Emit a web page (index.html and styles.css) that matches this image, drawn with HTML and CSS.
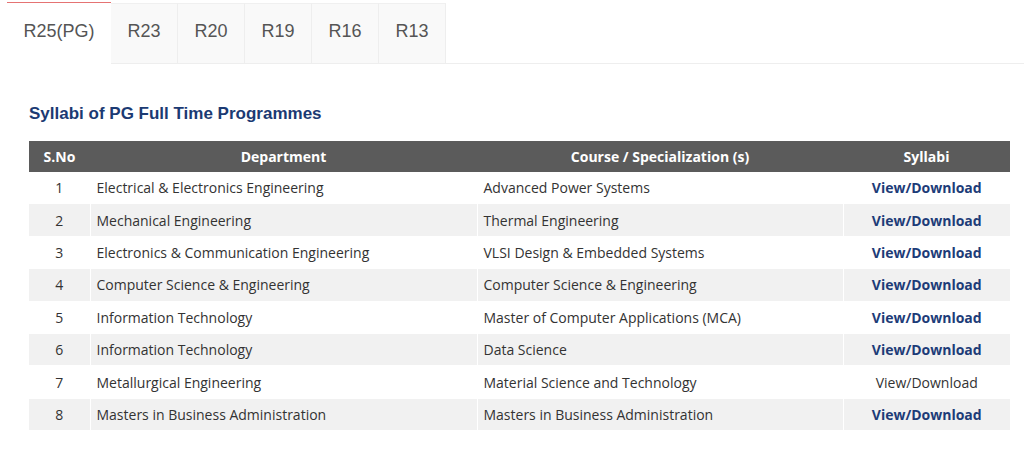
FILE: index.html
```html
<!DOCTYPE html>
<html>
<head>
<meta charset="utf-8">
<link rel="stylesheet" href="styles.css">
</head>
<body>
<div class="tabs">
  <div class="tab active">R25(PG)</div>
  <div class="tab">R23</div>
  <div class="tab">R20</div>
  <div class="tab">R19</div>
  <div class="tab">R16</div>
  <div class="tab">R13</div>
  <div class="tab-fill"></div>
</div>
<div class="content">
  <h2 class="title">Syllabi of PG Full Time Programmes</h2>
  <table class="syl">
    <colgroup>
      <col class="c1"><col class="c2"><col class="c3"><col class="c4">
    </colgroup>
    <thead>
      <tr><th>S.No</th><th>Department</th><th>Course / Specialization (s)</th><th>Syllabi</th></tr>
    </thead>
    <tbody>
      <tr><td class="num">1</td><td>Electrical &amp; Electronics Engineering</td><td>Advanced Power Systems</td><td class="lnk"><a>View/Download</a></td></tr>
      <tr><td class="num">2</td><td>Mechanical Engineering</td><td>Thermal Engineering</td><td class="lnk"><a>View/Download</a></td></tr>
      <tr><td class="num">3</td><td>Electronics &amp; Communication Engineering</td><td>VLSI Design &amp; Embedded Systems</td><td class="lnk"><a>View/Download</a></td></tr>
      <tr><td class="num">4</td><td>Computer Science &amp; Engineering</td><td>Computer Science &amp; Engineering</td><td class="lnk"><a>View/Download</a></td></tr>
      <tr><td class="num">5</td><td>Information Technology</td><td>Master of Computer Applications (MCA)</td><td class="lnk"><a>View/Download</a></td></tr>
      <tr><td class="num">6</td><td>Information Technology</td><td>Data Science</td><td class="lnk"><a>View/Download</a></td></tr>
      <tr><td class="num">7</td><td>Metallurgical Engineering</td><td>Material Science and Technology</td><td class="lnk plain">View/Download</td></tr>
      <tr><td class="num">8</td><td>Masters in Business Administration</td><td>Masters in Business Administration</td><td class="lnk"><a>View/Download</a></td></tr>
    </tbody>
  </table>
</div>
</body>
</html>
```

FILE: styles.css
```css
html, body {
  margin: 0;
  padding: 0;
  background: #fff;
}
body {
  font-family: "Open Sans", "Liberation Sans", sans-serif;
  color: #333;
}
.tabs {
  display: flex;
  padding: 2px 0 0 7px;
  height: 62px;
}
.tab {
  font-family: "Liberation Sans", Arial, sans-serif;
  font-size: 18px;
  color: #555;
  background: #f9f9f9;
  border: 1px solid #eee;
  border-left: none;
  border-top: 1px solid #f0f0f0;
  margin-top: 1px;
  width: 67px;
  box-sizing: border-box;
  display: flex;
  align-items: center;
  justify-content: center;
  padding-bottom: 5px;
}
.tab.active {
  background: #fff;
  border: none;
  border-top: 1px solid #e57373;
  margin-top: 0;
  width: 104px;
  padding: 0 0 4px 0;
}
.tab-fill {
  flex: 1;
  border-bottom: 1px solid #eee;
}
.content {
  padding: 39px 14px 0 29px;
}
.title {
  font-family: "Liberation Sans", Arial, sans-serif;
  font-size: 17px;
  font-weight: bold;
  color: #1b3a73;
  margin: 0 0 17px 0;
  line-height: 21px;
}
.syl {
  width: 981px;
  border-collapse: collapse;
  font-size: 14px;
}
.c1 { width: 61px; }
.c2 { width: 387px; }
.c3 { width: 366px; }
.c4 { width: 167px; }
.syl th {
  background: #5b5b5b;
  color: #fff;
  font-weight: bold;
  height: 31px;
  padding: 0 7px;
  text-align: center;
  border: none;
}
.syl td {
  height: 31.4px;
  padding: 0 6px;
  border: 1px solid #fff;
  border-top: none;
  vertical-align: middle;
}
.syl td:first-child { border-left: none; }
.syl td:last-child { border-right: none; }
.syl tbody tr:nth-child(even) td {
  background: #f1f1f1;
}
.syl td.num {
  text-align: center;
}
.syl td.lnk {
  text-align: center;
}
.syl td.lnk a {
  color: #1d3c78;
  font-weight: bold;
  text-decoration: none;
}
.syl td.plain {
  color: #333;
}
```
